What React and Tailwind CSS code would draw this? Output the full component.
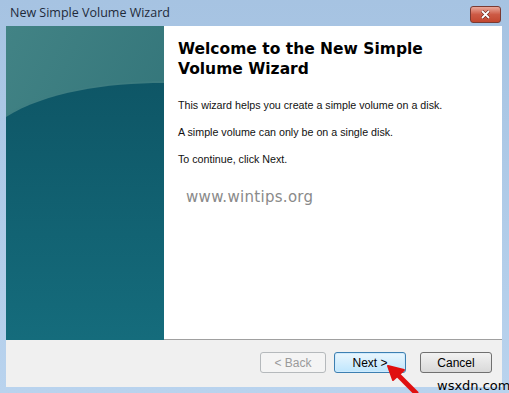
import React from 'react'

function TealPanel() {
  return (
    <svg width="158" height="314" viewBox="0 0 158 314" className="block">
      <defs>
        <linearGradient id="top" x1="0" y1="0" x2="1" y2="1">
          <stop offset="0" stopColor="#428385" />
          <stop offset="1" stopColor="#2d6f75" />
        </linearGradient>
        <linearGradient id="low" x1="0" y1="0" x2="0" y2="1">
          <stop offset="0" stopColor="#0e5666" />
          <stop offset="1" stopColor="#156c7c" />
        </linearGradient>
      </defs>
      <rect width="158" height="314" fill="url(#top)" />
      <path d="M0 89 C40 64 100 55 158 55 L158 314 L0 314 Z" fill="#3f7e81" opacity="0.5" />
      <path d="M0 91 C40 66 100 57 158 57 L158 314 L0 314 Z" fill="url(#low)" />
    </svg>
  )
}

export default function App() {
  return (
    <div className="relative w-[509px] h-[393px] overflow-hidden bg-gradient-to-b from-[#a6c3e2] to-[#b9d3ee] flex flex-col" style={{ fontFamily: '"Liberation Sans", Arial, sans-serif' }}>
      {/* title bar */}
      <div className="h-[26px] flex items-center justify-between pl-[10px] pr-[8px]">
        <span className="text-[12.5px] text-[#1e2a3a]" style={{ fontFamily: '"Open Sans", sans-serif' }}>New Simple Volume Wizard</span>
        <div className="w-[31px] h-[17px] mt-[2px] rounded-[3px] border border-[#7a3a32] bg-gradient-to-b from-[#e9a89b] via-[#cd5a45] to-[#c2472f] flex items-center justify-center">
          <svg width="11" height="9" viewBox="0 0 11 9">
            <path d="M2 1 L9 8 M9 1 L2 8" stroke="#5a1a12" strokeWidth="3" />
            <path d="M2 1 L9 8 M9 1 L2 8" stroke="#ffffff" strokeWidth="1.8" />
          </svg>
        </div>
      </div>

      <div className="ml-[6px] mr-[7px] flex flex-col">
        <div className="flex h-[314px] border-b border-[#a0a0a0]">
          <div className="w-[158px] h-full">
            <TealPanel />
          </div>
          <div className="flex-1 bg-white pl-[14px] pt-[13px]">
            <h1 className="text-[15.5px] font-bold leading-[20px] text-black w-[260px]" style={{ fontFamily: '"DejaVu Sans", Verdana, sans-serif' }}>
              Welcome to the New Simple Volume Wizard
            </h1>
            <div className="mt-[19px] text-[10.7px] leading-[14px] text-[#111] flex flex-col gap-[13px]">
              <p>This wizard helps you create a simple volume on a disk.</p>
              <p>A simple volume can only be on a single disk.</p>
              <p>To continue, click Next.</p>
            </div>
            <p className="mt-[20px] ml-[8px] text-[15px] text-[#8a8a8a] tracking-[0.3px]" style={{ fontFamily: '"DejaVu Sans", sans-serif' }}>
              www.wintips.org
            </p>
          </div>
        </div>
        <div className="h-[47px] bg-[#f0f0f0] flex items-center justify-end pr-[10px] pb-[2px]">
          <button className="w-[66px] h-[21px] rounded-[3px] border border-[#b5b9bc] bg-[#f4f4f4] text-[12px] text-[#9a9a9a]">
            &lt; Back
          </button>
          <button className="ml-[8px] w-[72px] h-[21px] rounded-[3px] border border-[#3c7fb1] bg-gradient-to-b from-[#eaf6fd] to-[#bee6fd] shadow-[inset_0_0_0_1px_#cfeafd] text-[12px] text-black">
            Next &gt;
          </button>
          <button className="ml-[14px] w-[72px] h-[21px] rounded-[3px] border border-[#707070] bg-gradient-to-b from-[#f2f2f2] to-[#d9d9d9] text-[12px] text-black">
            Cancel
          </button>
        </div>
      </div>

      {/* red arrow */}
      <svg className="absolute left-[380px] top-[358px]" width="50" height="35" viewBox="0 0 50 35">
        <path d="M36 35 L17 16" stroke="#e01010" strokeWidth="5" strokeLinecap="round" />
        <path d="M8 8 L24 12 L13 22 Z" fill="#e01010" stroke="#e01010" strokeWidth="2" strokeLinejoin="round" />
      </svg>
      <span className="absolute left-[437px] top-[376px] text-[13px] text-black" style={{ fontFamily: '"DejaVu Sans", sans-serif' }}>wsxdn.com</span>
    </div>
  )
}
